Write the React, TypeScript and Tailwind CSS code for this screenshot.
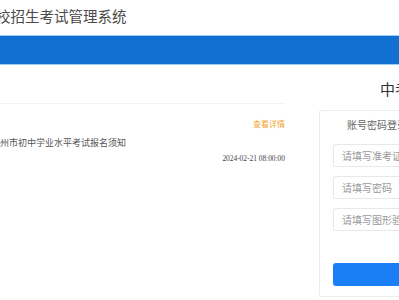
export default function App() {
  return (
    <div className="w-[399px] h-[300px] overflow-hidden bg-white font-['Noto_Sans_CJK_SC','Noto_Sans',sans-serif]">
      <header className="h-[35px] flex items-center whitespace-nowrap">
        <span className="ml-[-4px] mt-[-3px] text-[14.5px] leading-none text-[#4a4a4a]">校招生考试管理系统</span>
      </header>

      <nav className="h-[30px] bg-[#1170d2] border-y border-[#9ccbf5]"></nav>

      <main className="flex">
        <section className="w-[285px] shrink-0">
          <div className="h-[39px] border-b border-[#f3f3f3]"></div>
          <div className="flex justify-end mt-[16px]">
            <span className="text-[8px] leading-none text-[#f0a732]">查看详情</span>
          </div>
          <p className="mt-[10px] text-[9px] leading-none text-[#555] whitespace-nowrap">州市初中学业水平考试报名须知</p>
          <div className="flex justify-end mt-[8px]">
            <span className="font-['Liberation_Serif',serif] text-[7.4px] leading-none text-[#444]">2024-02-21 08:00:00</span>
          </div>
        </section>

        <section className="ml-[34px] flex-1 min-w-0">
          <h2 className="pl-[61px] mt-[16px] h-[14px] flex items-center text-[15px] leading-none text-[#333] whitespace-nowrap">中考报名</h2>
          <div className="mt-[15px] h-[187px] border border-[#ececec] rounded-[2px] w-[200px]">
            <div className="pl-[27px] mt-[9px] text-[10px] leading-none text-[#666] whitespace-nowrap">账号密码登录</div>
            <div className="ml-[13px] mt-[14px] flex flex-col gap-[9px]">
              <div className="h-[23px] border border-[#e8e8e8] rounded-[2px] flex items-center pl-[8px] text-[10px] text-[#999] whitespace-nowrap">请填写准考证号</div>
              <div className="h-[23px] border border-[#e8e8e8] rounded-[2px] flex items-center pl-[8px] text-[10px] text-[#999] whitespace-nowrap">请填写密码</div>
              <div className="h-[23px] border border-[#e8e8e8] rounded-[2px] flex items-center pl-[8px] text-[10px] text-[#999] whitespace-nowrap">请填写图形验证码</div>
            </div>
            <button className="ml-[13px] mt-[32px] h-[23px] w-[180px] rounded-[3px] bg-[#1a7ef5]"></button>
          </div>
        </section>
      </main>
    </div>
  );
}
